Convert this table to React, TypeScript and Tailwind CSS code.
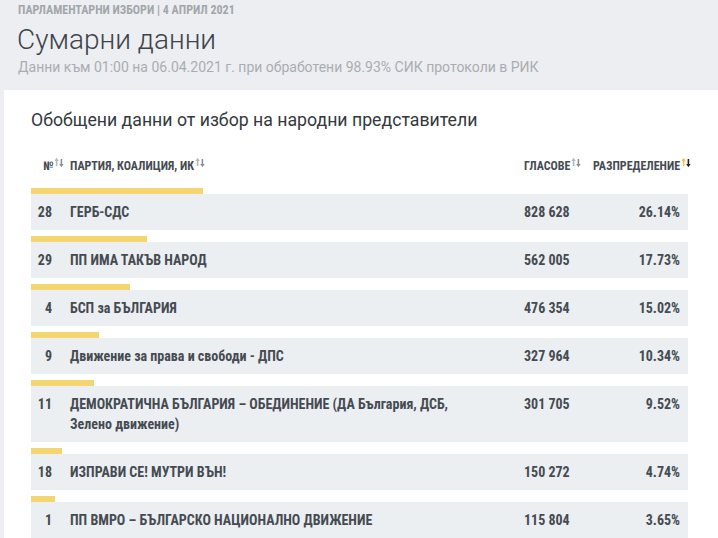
import React from 'react';

const COND = { fontFamily: '"Roboto Condensed", "Liberation Sans Narrow", Roboto, sans-serif' };
const ROBOTO = { fontFamily: 'Roboto, "Noto Sans", sans-serif' };

const TABLE_WIDTH = 657;

interface Party {
  no: number;
  name: string;
  votes: string;
  pct: number;
}

const parties: Party[] = [
  { no: 28, name: 'ГЕРБ-СДС', votes: '828 628', pct: 26.14 },
  { no: 29, name: 'ПП ИМА ТАКЪВ НАРОД', votes: '562 005', pct: 17.73 },
  { no: 4, name: 'БСП за БЪЛГАРИЯ', votes: '476 354', pct: 15.02 },
  { no: 9, name: 'Движение за права и свободи - ДПС', votes: '327 964', pct: 10.34 },
  { no: 11, name: 'ДЕМОКРАТИЧНА БЪЛГАРИЯ – ОБЕДИНЕНИЕ (ДА България, ДСБ, Зелено движение)', votes: '301 705', pct: 9.52 },
  { no: 18, name: 'ИЗПРАВИ СЕ! МУТРИ ВЪН!', votes: '150 272', pct: 4.74 },
  { no: 1, name: 'ПП ВМРО – БЪЛГАРСКО НАЦИОНАЛНО ДВИЖЕНИЕ', votes: '115 804', pct: 3.65 },
];

const SortIcon: React.FC<{ active?: boolean }> = ({ active }) => (
  <svg width="10" height="11" viewBox="0 0 10 11" className="inline-block align-top ml-px">
    <path d="M2.6 9V3" stroke={active ? '#f2c43d' : '#b3b8bd'} strokeWidth="1.6" />
    <path d="M0.4 4L2.6 0.8L4.8 4Z" fill={active ? '#f2c43d' : '#b3b8bd'} />
    <path d="M7.4 2V8" stroke={active ? '#222' : '#8a8f95'} strokeWidth="1.6" />
    <path d="M5.2 7L7.4 10.2L9.6 7Z" fill={active ? '#222' : '#8a8f95'} />
  </svg>
);

const App: React.FC = () => {
  return (
    <div className="w-[718px] h-[538px] overflow-hidden bg-[#eceef1]">
      {/* Page header */}
      <div className="pl-[18px] pt-[2px] h-[90px]">
        <div className="text-[12px] font-bold text-[#a2a6ab] leading-[16px] uppercase" style={COND}>
          ПАРЛАМЕНТАРНИ ИЗБОРИ | 4 АПРИЛ 2021
        </div>
        <h1 className="text-[28px] font-light text-[#3e4349] leading-[32px] mt-[6px] -ml-px" style={ROBOTO}>
          Сумарни данни
        </h1>
        <div className="text-[14px] text-[#a9adb2] leading-[20px] mt-[1px]" style={ROBOTO}>
          Данни към 01:00 на 06.04.2021 г. при обработени 98.93% СИК протоколи в РИК
        </div>
      </div>

      {/* Card */}
      <div className="ml-[4px] bg-white h-full pl-[27px] pt-[16px]">
        <h2 className="text-[17.7px] text-[#33383d] leading-[28px]" style={ROBOTO}>
          Обобщени данни от избор на народни представители
        </h2>

        <div className="w-[657px] mt-[22px]" style={COND}>
          {/* Column headers */}
          <div className="flex items-center h-[20px] text-[12px] font-bold uppercase text-[#454b52]">
            <div className="w-[39px] pl-[12px] whitespace-nowrap">
              №<SortIcon />
            </div>
            <div className="flex-1 whitespace-nowrap">
              ПАРТИЯ, КОАЛИЦИЯ, ИК<SortIcon />
            </div>
            <div className="w-[69px] whitespace-nowrap">
              ГЛАСОВЕ<SortIcon />
            </div>
            <div className="w-[95px] whitespace-nowrap">
              РАЗПРЕДЕЛЕНИЕ<SortIcon active />
            </div>
          </div>

          {/* Rows */}
          <div className="mt-[12px] flex flex-col gap-[6px]">
            {parties.map((p) => (
              <div key={p.no}>
                <div className="h-[6px] bg-[#f5d56f]" style={{ width: `${(p.pct / 100) * TABLE_WIDTH}px` }} />
                <div className="flex bg-[#eceff1] py-[8px] text-[14px] leading-[20px] font-bold text-[#454b52]">
                  <div className="w-[39px] pr-[18px] text-right">{p.no}</div>
                  <div className="flex-1 pr-[32px]">{p.name}</div>
                  <div className="w-[69px]">{p.votes}</div>
                  <div className="w-[95px] pr-[8px] text-right">{p.pct.toFixed(2)}%</div>
                </div>
              </div>
            ))}
          </div>
        </div>
      </div>
    </div>
  );
};

export default App;
